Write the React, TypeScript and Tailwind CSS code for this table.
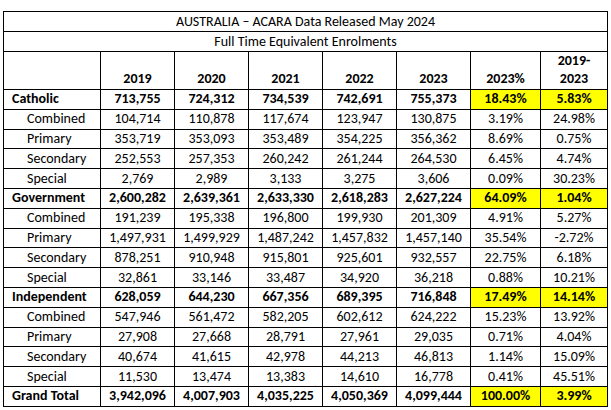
const rows: { label: string; bold?: boolean; values: string[]; pct: string; change: string }[] = [
  { label: "Catholic", bold: true, values: ["713,755", "724,312", "734,539", "742,691", "755,373"], pct: "18.43%", change: "5.83%" },
  { label: "Combined", values: ["104,714", "110,878", "117,674", "123,947", "130,875"], pct: "3.19%", change: "24.98%" },
  { label: "Primary", values: ["353,719", "353,093", "353,489", "354,225", "356,362"], pct: "8.69%", change: "0.75%" },
  { label: "Secondary", values: ["252,553", "257,353", "260,242", "261,244", "264,530"], pct: "6.45%", change: "4.74%" },
  { label: "Special", values: ["2,769", "2,989", "3,133", "3,275", "3,606"], pct: "0.09%", change: "30.23%" },
  { label: "Government", bold: true, values: ["2,600,282", "2,639,361", "2,633,330", "2,618,283", "2,627,224"], pct: "64.09%", change: "1.04%" },
  { label: "Combined", values: ["191,239", "195,338", "196,800", "199,930", "201,309"], pct: "4.91%", change: "5.27%" },
  { label: "Primary", values: ["1,497,931", "1,499,929", "1,487,242", "1,457,832", "1,457,140"], pct: "35.54%", change: "-2.72%" },
  { label: "Secondary", values: ["878,251", "910,948", "915,801", "925,601", "932,557"], pct: "22.75%", change: "6.18%" },
  { label: "Special", values: ["32,861", "33,146", "33,487", "34,920", "36,218"], pct: "0.88%", change: "10.21%" },
  { label: "Independent", bold: true, values: ["628,059", "644,230", "667,356", "689,395", "716,848"], pct: "17.49%", change: "14.14%" },
  { label: "Combined", values: ["547,946", "561,472", "582,205", "602,612", "624,222"], pct: "15.23%", change: "13.92%" },
  { label: "Primary", values: ["27,908", "27,668", "28,791", "27,961", "29,035"], pct: "0.71%", change: "4.04%" },
  { label: "Secondary", values: ["40,674", "41,615", "42,978", "44,213", "46,813"], pct: "1.14%", change: "15.09%" },
  { label: "Special", values: ["11,530", "13,474", "13,383", "14,610", "16,778"], pct: "0.41%", change: "45.51%" },
  { label: "Grand Total", bold: true, values: ["3,942,096", "4,007,903", "4,035,225", "4,050,369", "4,099,444"], pct: "100.00%", change: "3.99%" },
];

const years = ["2019", "2020", "2021", "2022", "2023"];

const App = () => {
  return (
    <div className="min-h-[410px] w-[611px] bg-white pt-[11px] pl-[3px] text-[14px] text-black font-['Carlito','Lato',sans-serif]">
      <table className="w-[604px] table-fixed border-collapse">
        <colgroup>
          <col className="w-[97px]" />
          <col className="w-[74px]" />
          <col className="w-[74px]" />
          <col className="w-[74px]" />
          <col className="w-[74px]" />
          <col className="w-[74px]" />
          <col className="w-[70px]" />
          <col className="w-[67px]" />
        </colgroup>
        <tbody>
          <tr className="h-[20px]">
            <td colSpan={8} className="border border-black p-0 text-center align-middle leading-[18px]">
              AUSTRALIA – ACARA Data Released May 2024
            </td>
          </tr>
          <tr className="h-[20px]">
            <td colSpan={8} className="border border-black p-0 text-center align-middle leading-[18px]">
              Full Time Equivalent Enrolments
            </td>
          </tr>
          <tr className="h-[37px] font-bold">
            <td className="border border-black p-0" />
            {years.map((y) => (
              <td key={y} className="border border-black p-0 pb-[1px] text-center align-bottom leading-[18px]">
                {y}
              </td>
            ))}
            <td className="border border-black p-0 pb-[1px] text-center align-bottom leading-[18px]">2023%</td>
            <td className="border border-black p-0 pb-[1px] text-center align-bottom leading-[18px]">
              2019-
              <br />
              2023
            </td>
          </tr>
          {rows.map((r, i) => (
            <tr key={i} className={`h-[19.8px] ${r.bold ? "font-bold" : ""}`}>
              <td
                className={`border border-black p-0 align-middle leading-[18px] whitespace-nowrap ${
                  r.bold ? "pl-[8px]" : "pl-[23px]"
                }`}
              >
                {r.label}
              </td>
              {r.values.map((v, j) => (
                <td key={j} className="border border-black p-0 text-center align-middle leading-[18px]">
                  {v}
                </td>
              ))}
              <td
                className={`border border-black p-0 text-center align-middle leading-[18px] ${
                  r.bold ? "bg-[#ffff00]" : ""
                }`}
              >
                {r.pct}
              </td>
              <td
                className={`border border-black p-0 text-center align-middle leading-[18px] ${
                  r.bold ? "bg-[#ffff00]" : ""
                }`}
              >
                {r.change}
              </td>
            </tr>
          ))}
        </tbody>
      </table>
    </div>
  );
};

export default App;
